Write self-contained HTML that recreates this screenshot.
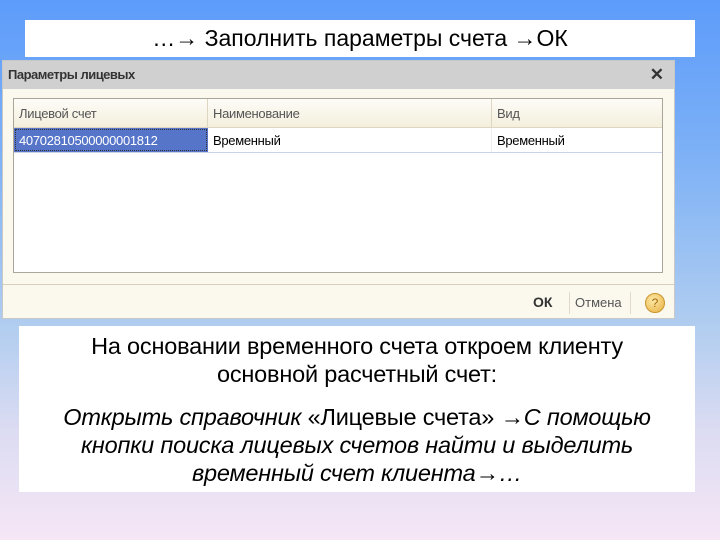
<!DOCTYPE html>
<html><head><meta charset="utf-8"><style>
*{margin:0;padding:0;box-sizing:border-box}
body{width:720px;height:540px;overflow:hidden;position:relative;font-family:"Liberation Sans",sans-serif;
background:linear-gradient(180deg,#5d9cfb 0%,#7fb2f6 30%,#b0cdf0 60%,#dcdcf2 80%,#f6e6f6 100%)}
.top{position:absolute;left:25px;top:20px;width:670px;height:37px;background:#fff;text-align:center;font-size:23px;line-height:37px;color:#000}
.dlg{position:absolute;left:2px;top:60px;width:673px;height:259px;background:#fbf8ee;border:1px solid #c8c8c8}
.tb{height:28px;background:#d0d0d0;font-size:13px;font-weight:bold;color:#333;line-height:28px;padding-left:5px;letter-spacing:-0.5px}
.x{position:absolute;right:10px;top:4px;font-size:17px;font-weight:bold;color:#333}
.tbl{position:absolute;left:10px;top:37px;width:650px;height:175px;background:#fff;border:1px solid #aaa79a}
.hdr{height:29px;background:linear-gradient(#fdfcf7,#f4efdd);border-bottom:1px solid #ddd6c0;position:relative;font-size:13px;color:#555;line-height:29px;letter-spacing:-0.3px}
.row{height:25px;position:relative;font-size:13px;line-height:25px;border-bottom:1px solid #c8d2e8;letter-spacing:-0.3px}
.c{position:absolute;top:0;height:100%;padding-left:5px}
.sel{background:#5675c8;color:#fff;outline:1px dotted #333;outline-offset:-2px}
.ft{position:absolute;left:0;top:223px;width:100%;border-top:1px solid #d6d0bd;height:35px}
.ok{position:absolute;left:530px;top:9px;font-weight:bold;font-size:14px;color:#333}
.cn{position:absolute;left:566px;top:7px;font-size:13px;line-height:22px;color:#555;border-left:1px solid #e0dac8;border-right:1px solid #e0dac8;padding:0 8px 0 5px;height:22px}
.q{position:absolute;left:642px;top:8px;width:20px;height:20px;border-radius:50%;background:radial-gradient(circle at 40% 35%,#fde9a8,#e8b040);border:1px solid #c99530;text-align:center;font-size:12px;line-height:18px;color:#a06a10}
.bot{position:absolute;left:19px;top:326px;width:676px;height:166px;background:#fff;text-align:center;font-size:23.5px;line-height:28px;color:#000;letter-spacing:-0.2px}
</style></head><body>
<div class="top">…→ Заполнить параметры счета →ОК</div>
<div class="dlg">
<div class="tb">Параметры лицевых</div><div class="x">✕</div>
<div class="tbl">
<div class="hdr"><div class="c" style="left:0;width:194px;border-right:1px solid #ddd6c0">Лицевой счет</div><div class="c" style="left:194px;width:284px;border-right:1px solid #ddd6c0">Наименование</div><div class="c" style="left:478px">Вид</div></div>
<div class="row"><div class="c sel" style="left:0;width:194px">40702810500000001812</div><div class="c" style="left:194px;width:284px;border-right:1px solid #eee">Временный</div><div class="c" style="left:478px">Временный</div></div>
</div>
<div class="ft"><div class="ok">ОК</div><div class="cn">Отмена</div><div class="q">?</div></div>
</div>
<div class="bot">
<div style="margin-top:6px">На основании временного счета откроем клиенту<br>основной расчетный счет:</div>
<div style="margin-top:15px;font-style:italic">Открыть справочник <span style="font-style:normal">«Лицевые счета» →</span>С помощью<br>кнопки поиска лицевых счетов найти и выделить<br>временный счет клиента→…</div>
</div>
</body></html>
